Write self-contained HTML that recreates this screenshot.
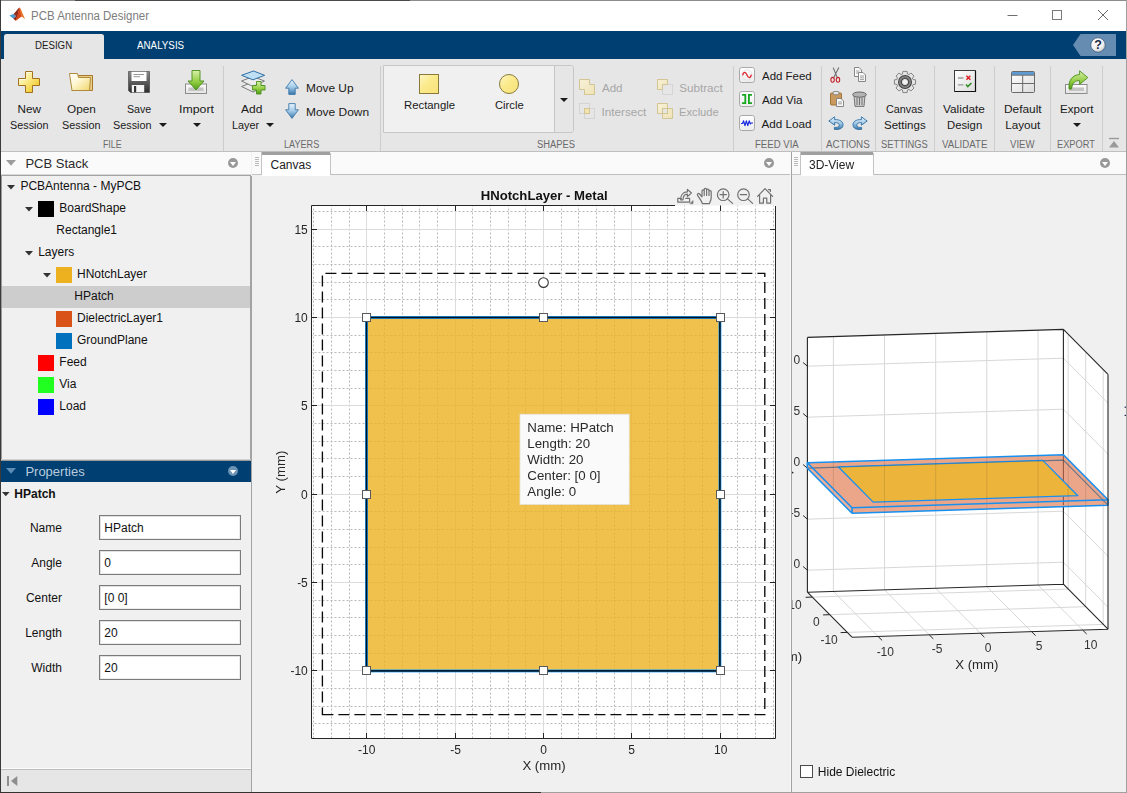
<!DOCTYPE html>
<html>
<head>
<meta charset="utf-8">
<title>PCB Antenna Designer</title>
<style>
*{box-sizing:border-box;margin:0;padding:0}
html,body{width:1127px;height:793px;overflow:hidden;background:#f0f0f0}
body{font-family:"Liberation Sans",sans-serif;font-size:12px;color:#1a1a1a;position:relative}
.abs{position:absolute}
#win{position:absolute;left:0;top:0;width:1127px;height:793px;overflow:hidden;background:#f0f0f0}
.tx{position:absolute;white-space:pre;transform-origin:0 50%;color:#1a1a1a}
.sec{color:#6b6b6b}
.dis{color:#a6a6a6}
.vsep{position:absolute;top:66px;width:1px;height:85px;background:#cdcdcd}
.arr{position:absolute;width:0;height:0;border-left:4px solid transparent;border-right:4px solid transparent;border-top:4px solid #1a1a1a}
.ico{position:absolute;overflow:visible}
.circ{position:absolute;width:10px;height:10px;border-radius:50%;background:#999}
.circ:after{content:"";position:absolute;left:2px;top:3.5px;border-left:3px solid transparent;border-right:3px solid transparent;border-top:4px solid #fff}
.sw{position:absolute;width:16px;height:16px}
.tri{position:absolute;width:0;height:0;border-left:4px solid transparent;border-right:4px solid transparent;border-top:4px solid #333}
.field{position:absolute;left:98px;width:143px;height:25px;background:#fff;border:1px solid #7a7a7a}
svg text{font-family:"Liberation Sans",sans-serif}
</style>
</head>
<body>
<div id="win">
<div class="abs" style="left:1px;top:1px;width:1125px;height:30px;background:#fff"></div>
<svg class="ico" style="left:9px;top:7px" width="17" height="16" viewBox="0 0 17 16">
<path d="M0.4 8.6 L4.6 6.9 L7.2 9.2 L4.2 11.6 Z" fill="#4a9ad4"/>
<path d="M4.6 6.9 C6.8 5.2 8.6 1.6 10.4 0.6 L9.2 8.8 L6.6 13.8 L4.2 11.6 L7.2 9.2 Z" fill="#8c2a1c"/>
<path d="M10.4 0.6 C12 1.2 13.6 7.2 16.2 12.2 C14.4 10.8 13.2 9.6 12.2 9.8 C10.6 10.2 8.6 13 6.6 13.8 C8.2 10.6 9.4 4.6 10.4 0.6 Z" fill="#e8742a"/>
<path d="M10.4 0.6 C11 3.6 11.8 7.6 12.2 9.8 C10.6 10.2 8.6 13 6.6 13.8 C8.2 10.6 9.4 4.6 10.4 0.6 Z" fill="#d6451f"/>
</svg>
<span class="tx" style="left:30.70px;top:7.64px;font-size:12px;line-height:16px;transform:scaleX(0.9562);color:#7d7d7d;">PCB Antenna Designer</span>
<svg class="ico" style="left:1000px;top:5px" width="120" height="22" viewBox="0 0 120 22">
<path d="M7.5 10.5 H17.5" stroke="#6f6f6f" stroke-width="1" fill="none"/>
<rect x="52.5" y="5.5" width="9" height="9" stroke="#7a7a7a" stroke-width="1" fill="none"/>
<path d="M98 5 L108 15 M108 5 L98 15" stroke="#6a6a6a" stroke-width="1" fill="none"/>
</svg>
<div class="abs" style="left:1px;top:31px;width:1125px;height:28px;background:#003f72"></div>
<div class="abs" style="left:4px;top:34px;width:100px;height:25px;background:#e6e6e6;border-radius:2.5px 2.5px 0 0"></div>
<span class="tx" style="left:35.40px;top:37.45px;font-size:11.7px;line-height:15px;transform:scaleX(0.8293);color:#1c1c1c;">DESIGN</span>
<span class="tx" style="left:136.60px;top:37.45px;font-size:11.7px;line-height:15px;transform:scaleX(0.8375);color:#ffffff;">ANALYSIS</span>
<svg class="ico" style="left:1073px;top:34px" width="44" height="22" viewBox="0 0 44 22">
<defs><radialGradient id="hg" cx="0.4" cy="0.3" r="0.8"><stop offset="0" stop-color="#ffffff"/><stop offset="0.6" stop-color="#f0f0f0"/><stop offset="1" stop-color="#b8b8b8"/></radialGradient></defs>
<path d="M0 11 L7.5 0 H43 V22 H7.5 Z" fill="#668db1"/>
<circle cx="25" cy="11" r="7.2" fill="url(#hg)" stroke="#2a4a70" stroke-width="0.6"/>
<text x="25" y="15.4" font-size="12.5" font-weight="bold" text-anchor="middle" fill="#1c2a48">?</text>
</svg>
<div class="abs" style="left:1px;top:59px;width:1125px;height:92px;background:#e6e6e6"></div>
<div class="abs" style="left:1px;top:151px;width:1125px;height:1px;background:#bfbfbf"></div>
<div class="vsep" style="left:223px"></div>
<div class="vsep" style="left:380px"></div>
<div class="vsep" style="left:733px"></div>
<div class="vsep" style="left:821px"></div>
<div class="vsep" style="left:875px"></div>
<div class="vsep" style="left:934px"></div>
<div class="vsep" style="left:994px"></div>
<div class="vsep" style="left:1050px"></div>
<div class="vsep" style="left:1102px"></div>
<span class="tx sec" style="left:103.00px;top:136.25px;font-size:11.7px;line-height:15px;transform:scaleX(0.7487);">FILE</span>
<span class="tx sec" style="left:283.90px;top:136.25px;font-size:11.7px;line-height:15px;transform:scaleX(0.7792);">LAYERS</span>
<span class="tx sec" style="left:537.00px;top:136.25px;font-size:11.7px;line-height:15px;transform:scaleX(0.8005);">SHAPES</span>
<span class="tx sec" style="left:755.00px;top:136.25px;font-size:11.7px;line-height:15px;transform:scaleX(0.8216);">FEED VIA</span>
<span class="tx sec" style="left:826.20px;top:136.25px;font-size:11.7px;line-height:15px;transform:scaleX(0.8422);">ACTIONS</span>
<span class="tx sec" style="left:881.20px;top:136.25px;font-size:11.7px;line-height:15px;transform:scaleX(0.7999);">SETTINGS</span>
<span class="tx sec" style="left:942.00px;top:136.25px;font-size:11.7px;line-height:15px;transform:scaleX(0.8298);">VALIDATE</span>
<span class="tx sec" style="left:1010.00px;top:136.25px;font-size:11.7px;line-height:15px;transform:scaleX(0.8227);">VIEW</span>
<span class="tx sec" style="left:1057.30px;top:136.25px;font-size:11.7px;line-height:15px;transform:scaleX(0.7913);">EXPORT</span>
<span class="tx" style="left:17.50px;top:101.25px;font-size:11.7px;line-height:15px;">New</span>
<span class="tx" style="left:9.80px;top:117.05px;font-size:11.7px;line-height:15px;transform:scaleX(0.9249);">Session</span>
<span class="tx" style="left:66.60px;top:101.25px;font-size:11.7px;line-height:15px;transform:scaleX(1.0097);">Open</span>
<span class="tx" style="left:61.70px;top:117.05px;font-size:11.7px;line-height:15px;transform:scaleX(0.9249);">Session</span>
<span class="tx" style="left:126.70px;top:101.25px;font-size:11.7px;line-height:15px;transform:scaleX(0.9112);">Save</span>
<span class="tx" style="left:113.30px;top:117.05px;font-size:11.7px;line-height:15px;transform:scaleX(0.9249);">Session</span>
<div class="arr" style="left:159px;top:123px"></div>
<span class="tx" style="left:178.70px;top:101.25px;font-size:11.7px;line-height:15px;transform:scaleX(1.0555);">Import</span>
<div class="arr" style="left:192.5px;top:123px"></div>
<span class="tx" style="left:241.30px;top:101.25px;font-size:11.7px;line-height:15px;transform:scaleX(1.0231);">Add</span>
<span class="tx" style="left:232.40px;top:117.05px;font-size:11.7px;line-height:15px;transform:scaleX(0.9293);">Layer</span>
<div class="arr" style="left:266px;top:123px"></div>
<span class="tx" style="left:306.40px;top:80.45px;font-size:11.7px;line-height:15px;transform:scaleX(1.0167);">Move Up</span>
<span class="tx" style="left:306.40px;top:104.45px;font-size:11.7px;line-height:15px;transform:scaleX(1.0231);">Move Down</span>
<div class="abs" style="left:383px;top:65px;width:191px;height:68px;background:#f0f0f0;border:1px solid #c6c6c6;border-radius:0 3px 3px 0"></div>
<div class="abs" style="left:554px;top:66px;width:19px;height:66px;background:#e6e6e6;border-left:1px solid #c6c6c6;border-radius:0 3px 3px 0"></div>
<div class="arr" style="left:560px;top:98px"></div>
<span class="tx" style="left:403.70px;top:97.05px;font-size:11.7px;line-height:15px;transform:scaleX(0.9699);">Rectangle</span>
<span class="tx" style="left:494.60px;top:97.05px;font-size:11.7px;line-height:15px;transform:scaleX(0.9598);">Circle</span>
<span class="tx dis" style="left:601.50px;top:80.45px;font-size:11.7px;line-height:15px;transform:scaleX(0.9847);">Add</span>
<span class="tx dis" style="left:601.50px;top:104.45px;font-size:11.7px;line-height:15px;">Intersect</span>
<span class="tx dis" style="left:679.20px;top:80.45px;font-size:11.7px;line-height:15px;">Subtract</span>
<span class="tx dis" style="left:679.20px;top:104.45px;font-size:11.7px;line-height:15px;transform:scaleX(0.9562);">Exclude</span>
<span class="tx" style="left:761.50px;top:68.45px;font-size:11.7px;line-height:15px;transform:scaleX(0.9815);">Add Feed</span>
<span class="tx" style="left:761.50px;top:92.15px;font-size:11.7px;line-height:15px;transform:scaleX(0.9934);">Add Via</span>
<span class="tx" style="left:761.50px;top:116.25px;font-size:11.7px;line-height:15px;">Add Load</span>
<span class="tx" style="left:886.00px;top:101.25px;font-size:11.7px;line-height:15px;transform:scaleX(0.9251);">Canvas</span>
<span class="tx" style="left:883.70px;top:117.05px;font-size:11.7px;line-height:15px;transform:scaleX(0.9864);">Settings</span>
<span class="tx" style="left:943.40px;top:101.25px;font-size:11.7px;line-height:15px;transform:scaleX(1.0141);">Validate</span>
<span class="tx" style="left:947.00px;top:117.05px;font-size:11.7px;line-height:15px;transform:scaleX(0.9665);">Design</span>
<span class="tx" style="left:1003.70px;top:101.25px;font-size:11.7px;line-height:15px;transform:scaleX(1.0169);">Default</span>
<span class="tx" style="left:1005.20px;top:117.05px;font-size:11.7px;line-height:15px;">Layout</span>
<span class="tx" style="left:1059.50px;top:101.25px;font-size:11.7px;line-height:15px;transform:scaleX(0.9936);">Export</span>
<div class="arr" style="left:1072.5px;top:123px"></div>
<svg class="ico" style="left:1108px;top:137px" width="12" height="12" viewBox="0 0 12 12"><path d="M1 1.5 H11" stroke="#9a9a9a" stroke-width="1.4"/><path d="M6 4 L11 10.5 H1 Z" fill="#9a9a9a"/></svg>
<svg width="0" height="0" style="position:absolute"><defs>
<linearGradient id="gy" x1="0" y1="0" x2="1" y2="1"><stop offset="0" stop-color="#fffdf2"/><stop offset="0.35" stop-color="#fdf0a2"/><stop offset="0.7" stop-color="#f5d64a"/><stop offset="1" stop-color="#e2b02a"/></linearGradient>
<linearGradient id="gfold" x1="0" y1="0" x2="1" y2="1"><stop offset="0" stop-color="#ffffff"/><stop offset="0.4" stop-color="#fff8d6"/><stop offset="1" stop-color="#f0d56a"/></linearGradient>
<linearGradient id="gsave" x1="0" y1="0" x2="0" y2="1"><stop offset="0" stop-color="#8a8a8a"/><stop offset="1" stop-color="#2e2e2e"/></linearGradient>
<linearGradient id="ggreen" x1="0" y1="0" x2="0" y2="1"><stop offset="0" stop-color="#d9f0a8"/><stop offset="0.6" stop-color="#8fcb3e"/><stop offset="1" stop-color="#4f9a1a"/></linearGradient>
<linearGradient id="gtray" x1="0" y1="0" x2="0" y2="1"><stop offset="0" stop-color="#ffffff"/><stop offset="1" stop-color="#e2e2e2"/></linearGradient>
<linearGradient id="gblue" x1="0" y1="0" x2="0" y2="1"><stop offset="0" stop-color="#eaf4fc"/><stop offset="0.5" stop-color="#a3cbe8"/><stop offset="1" stop-color="#3776ab"/></linearGradient>
<linearGradient id="gshape" x1="0" y1="0" x2="1" y2="1"><stop offset="0" stop-color="#fdf6c4"/><stop offset="0.45" stop-color="#fbea8c"/><stop offset="1" stop-color="#f7e27a"/></linearGradient>
<linearGradient id="gdis" x1="0" y1="0" x2="1" y2="1"><stop offset="0" stop-color="#f7f1d8"/><stop offset="1" stop-color="#efe3b6"/></linearGradient>
<linearGradient id="gbtn" x1="0" y1="0" x2="0" y2="1"><stop offset="0" stop-color="#ffffff"/><stop offset="1" stop-color="#ececec"/></linearGradient>
<linearGradient id="gpane" x1="0" y1="0" x2="1" y2="1"><stop offset="0" stop-color="#ffffff"/><stop offset="1" stop-color="#dcdcdc"/></linearGradient>
<radialGradient id="ggear" cx="0.5" cy="0.5" r="0.5"><stop offset="0.36" stop-color="#f0f0f0"/><stop offset="0.44" stop-color="#383838"/><stop offset="0.74" stop-color="#909090"/><stop offset="0.92" stop-color="#404040"/><stop offset="1" stop-color="#404040"/></radialGradient>
</defs></svg>
<svg class="ico" style="left:18px;top:71px" width="22" height="22" viewBox="0 0 22 22"><path d="M7.5 0.5 H14.5 V7.5 H21.5 V14.5 H14.5 V21.5 H7.5 V14.5 H0.5 V7.5 H7.5 Z" fill="url(#gy)" stroke="#a3721f" stroke-width="1" stroke-linejoin="round"/><path d="M8.5 1.5 H13.5 M1.5 8.5 H7.5 " stroke="#fffdf0" stroke-width="1" opacity="0.8"/></svg>
<svg class="ico" style="left:69px;top:73px" width="24" height="18" viewBox="0 0 24 18"><path d="M9.5 2.5 H23.5 V17.5 H3 Z" fill="#e8cf85" stroke="#a8782a" stroke-width="1" stroke-linejoin="round"/><path d="M0.5 0.5 H8.5 L9.5 4.5 H21.5 L20.5 17.5 H3 Z" fill="url(#gfold)" stroke="#b08a3c" stroke-width="1" stroke-linejoin="round"/></svg>
<svg class="ico" style="left:128px;top:71px" width="22" height="22" viewBox="0 0 22 22"><path d="M0.5 0.5 H21.5 V21.5 H2.5 L0.5 19.5 Z" fill="url(#gsave)" stroke="#3a3a3a" stroke-width="0.6"/><rect x="3.5" y="0.8" width="15" height="9.2" fill="#fff"/><path d="M5.5 3.5 H16 M5.5 5.7 H12" stroke="#8a8a8a" stroke-width="0.9"/><rect x="3.8" y="14" width="12.4" height="7.3" fill="#f4f4f4"/><rect x="6" y="15" width="2.2" height="6.3" fill="#333"/></svg>
<svg class="ico" style="left:185px;top:70px" width="22" height="24" viewBox="0 0 22 24"><rect x="0.5" y="14" width="21" height="9.5" fill="url(#gtray)" stroke="#8c8c8c" stroke-width="1"/><rect x="3.5" y="17.5" width="15" height="3.5" fill="#c4c4c4"/><path d="M7 0.5 H15 V11 H19 L11 20 L3 11 H7 Z" fill="url(#ggreen)" stroke="#4a8f1c" stroke-width="0.9" stroke-linejoin="round"/></svg>
<svg class="ico" style="left:241px;top:70px" width="25" height="24" viewBox="0 0 25 24"><path d="M0.6 16.5 L12 12 L23.4 16.5 L12 22 Z" fill="#ececec" stroke="#6e6e6e" stroke-width="0.9"/><path d="M0.6 11 L12 6.5 L23.4 11 L12 16.5 Z" fill="#ececec" stroke="#6e6e6e" stroke-width="0.9"/><path d="M0.6 5.3 L12.5 1 L23.6 5.3 L12 9.8 Z" fill="#bfe0f4" stroke="#2f6ea3" stroke-width="1"/><path d="M15.5 11.5 H20 V15.5 H24 V20 H20 V24 H15.5 V20 H11.5 V15.5 H15.5 Z" fill="url(#ggreen)" stroke="#4a8f1c" stroke-width="0.9" stroke-linejoin="round"/></svg>
<svg class="ico" style="left:285px;top:79px" width="14" height="16" viewBox="0 0 14 16"><path d="M7 0.6 L13.4 9.2 H10.2 V15.4 H3.8 V9.2 H0.6 Z" fill="url(#gblue)" stroke="#3d78aa" stroke-width="0.9" stroke-linejoin="round"/></svg>
<svg class="ico" style="left:285px;top:103px" width="14" height="16" viewBox="0 0 14 16"><path d="M7 15.4 L13.4 6.8 H10.2 V0.6 H3.8 V6.8 H0.6 Z" fill="url(#gblue)" stroke="#3d78aa" stroke-width="0.9" stroke-linejoin="round"/></svg>
<svg class="ico" style="left:419px;top:74px" width="20" height="20" viewBox="0 0 20 20"><rect x="0.5" y="0.5" width="19" height="19" fill="url(#gshape)" stroke="#8a7a3a" stroke-width="1"/></svg>
<svg class="ico" style="left:499px;top:74px" width="20" height="20" viewBox="0 0 20 20"><circle cx="10" cy="10" r="9.5" fill="url(#gshape)" stroke="#8a7a3a" stroke-width="1"/></svg>
<svg class="ico" style="left:579px;top:79px" width="16" height="16" viewBox="0 0 16 16"><path d="M0.5 0.5 H10.5 V5.5 H15.5 V15.5 H5.5 V10.5 H0.5 Z" fill="url(#gdis)" stroke="#d2c493" stroke-width="1"/></svg>
<svg class="ico" style="left:579px;top:103px" width="16" height="16" viewBox="0 0 16 16"><rect x="0.5" y="0.5" width="10" height="10" fill="none" stroke="#d4d4d4"/><rect x="5.5" y="5.5" width="10" height="10" fill="none" stroke="#d4d4d4"/><rect x="5.5" y="5.5" width="5" height="5" fill="#f1e4ae" stroke="#d2c493"/></svg>
<svg class="ico" style="left:657px;top:79px" width="16" height="16" viewBox="0 0 16 16"><rect x="5.5" y="5.5" width="10" height="10" fill="none" stroke="#d4d4d4"/><path d="M0.5 0.5 H10.5 V5.5 H5.5 V10.5 H0.5 Z" fill="url(#gdis)" stroke="#d2c493"/></svg>
<svg class="ico" style="left:657px;top:103px" width="16" height="16" viewBox="0 0 16 16"><path d="M0.5 0.5 H10.5 V5.5 H15.5 V15.5 H5.5 V10.5 H0.5 Z" fill="url(#gdis)" stroke="#d2c493"/><rect x="5.5" y="5.5" width="5" height="5" fill="#e6e6e6" stroke="#d2c493"/></svg>
<svg class="ico" style="left:739px;top:67px" width="16" height="16" viewBox="0 0 16 16"><rect x="0.5" y="0.5" width="15" height="15" rx="2.2" fill="url(#gbtn)" stroke="#a9a9a9"/><circle cx="8" cy="8" r="5.2" fill="none" stroke="#e2e2e2" stroke-width="0.8"/><path d="M3.6 8.4 C4.6 4.2 6.6 4.6 8 8 C9.4 11.4 11.4 11.6 12.4 7.6" fill="none" stroke="#e0202a" stroke-width="1.3"/></svg>
<svg class="ico" style="left:739px;top:91px" width="16" height="16" viewBox="0 0 16 16"><rect x="0.5" y="0.5" width="15" height="15" rx="2.2" fill="url(#gbtn)" stroke="#a9a9a9"/><path d="M3 3.8 H6.3 V12.2 H3 M13 3.8 H9.9 V12.2 H13" fill="none" stroke="#18a81e" stroke-width="1.8"/></svg>
<svg class="ico" style="left:739px;top:115px" width="16" height="16" viewBox="0 0 16 16"><rect x="0.5" y="0.5" width="15" height="15" rx="2.2" fill="url(#gbtn)" stroke="#a9a9a9"/><path d="M2 8.5 H3.6 L4.6 5.8 L6 10.6 L7.4 5.8 L8.8 10.6 L10.2 5.8 L11.4 9 L12.2 8 H14" fill="none" stroke="#1a2be0" stroke-width="1.2" stroke-linejoin="round"/></svg>
<svg class="ico" style="left:830px;top:67px" width="11" height="16" viewBox="0 0 11 16"><path d="M8.8 0.4 L3.8 10.6 M3.2 0.6 L7.2 10.6" stroke="#6e6e6e" stroke-width="1.1" fill="none"/><ellipse cx="2.6" cy="12.8" rx="1.7" ry="2.4" fill="none" stroke="#c4222a" stroke-width="1.1"/><ellipse cx="8" cy="12.8" rx="1.7" ry="2.4" fill="none" stroke="#c4222a" stroke-width="1.1"/></svg>
<svg class="ico" style="left:854px;top:67px" width="12" height="15" viewBox="0 0 12 15"><path d="M0.5 0.5 H5 L7.5 3 V9.5 H0.5 Z" fill="#fafafa" stroke="#7a7a7a" stroke-width="0.9"/><path d="M2 4 H5.5 M2 6 H5.5" stroke="#8a8a8a" stroke-width="0.8"/><path d="M4.5 5.5 H9 L11.5 8 V14.5 H4.5 Z" fill="#fafafa" stroke="#7a7a7a" stroke-width="0.9"/><path d="M6 9 H10 M6 10.8 H10 M6 12.6 H10" stroke="#8a8a8a" stroke-width="0.8"/></svg>
<svg class="ico" style="left:830px;top:91px" width="14" height="16" viewBox="0 0 14 16"><rect x="0.5" y="2" width="11" height="12" rx="1" fill="#c99a5e" stroke="#9a6a2e" stroke-width="0.9"/><rect x="3.2" y="0.5" width="5.6" height="3.2" rx="0.8" fill="#e6e6e6" stroke="#7a7a7a" stroke-width="0.8"/><path d="M6.5 7.5 H11 L13.5 10 V15.5 H6.5 Z" fill="#fbfbfb" stroke="#7a7a7a" stroke-width="0.9"/><path d="M8 11 H12 M8 12.8 H12" stroke="#8a8a8a" stroke-width="0.8"/></svg>
<svg class="ico" style="left:852px;top:91px" width="15" height="16" viewBox="0 0 15 16"><path d="M2 4.5 H13 L12 15.4 H3 Z" fill="#cfcfcf" stroke="#6a6a6a" stroke-width="0.9"/><ellipse cx="7.5" cy="3.6" rx="6.8" ry="2.6" fill="#b4b4b4" stroke="#5a5a5a" stroke-width="0.9"/><path d="M5 6.5 V14 M7.5 6.5 V14 M10 6.5 V14" stroke="#6e6e6e" stroke-width="1"/></svg>
<svg class="ico" style="left:828px;top:116px" width="16" height="14" viewBox="0 0 16 14"><path d="M6.6 0.8 L0.8 5 L6.6 9.2 V6.6 C10 6.4 11.4 7.6 11.2 9.4 C11 11 9.4 11.6 6.4 11.4 V13.4 C11.6 13.8 14.8 12.4 15 9.2 C15.2 5.6 12 3.4 6.6 3.6 Z" fill="url(#gblue)" stroke="#2f6ea3" stroke-width="0.9" stroke-linejoin="round"/></svg>
<svg class="ico" style="left:852px;top:116px" width="16" height="14" viewBox="0 0 16 14"><g transform="translate(16,0) scale(-1,1)"><path d="M6.6 0.8 L0.8 5 L6.6 9.2 V6.6 C10 6.4 11.4 7.6 11.2 9.4 C11 11 9.4 11.6 6.4 11.4 V13.4 C11.6 13.8 14.8 12.4 15 9.2 C15.2 5.6 12 3.4 6.6 3.6 Z" fill="url(#gblue)" stroke="#2f6ea3" stroke-width="0.9" stroke-linejoin="round"/></g></svg>
<svg class="ico" style="left:894px;top:71px" width="22" height="22" viewBox="0 0 22 22"><path d="M19.02 8.52 L21.58 8.85 L21.58 13.15 L19.02 13.48 L18.43 14.92 L20.00 16.97 L16.97 20.00 L14.92 18.43 L13.48 19.02 L13.15 21.58 L8.85 21.58 L8.52 19.02 L7.08 18.43 L5.03 20.00 L2.00 16.97 L3.57 14.92 L2.98 13.48 L0.42 13.15 L0.42 8.85 L2.98 8.52 L3.57 7.08 L2.00 5.03 L5.03 2.00 L7.08 3.57 L8.52 2.98 L8.85 0.42 L13.15 0.42 L13.48 2.98 L14.92 3.57 L16.97 2.00 L20.00 5.03 L18.43 7.08 Z" fill="#e4e4e4" stroke="#7a7a7a" stroke-width="0.9" stroke-linejoin="round"/><circle cx="11" cy="11" r="7" fill="url(#ggear)"/><circle cx="11" cy="11" r="2.6" fill="#f2f2f2" stroke="#dadada" stroke-width="0.8"/></svg>
<svg class="ico" style="left:954px;top:70px" width="22" height="22" viewBox="0 0 22 22"><rect x="0.5" y="0.5" width="21" height="21" fill="url(#gpane)" stroke="#3c3c3c" stroke-width="1"/><path d="M21.5 1 V21.5 H1" stroke="#111" stroke-width="1.2" fill="none"/><path d="M4 8 H9.5 M4 14.8 H9.5" stroke="#9a9a9a" stroke-width="1.3"/><path d="M12.4 5.8 L16.4 9.8 M16.4 5.8 L12.4 9.8" stroke="#dc1f26" stroke-width="1.5"/><path d="M12 14.6 L13.8 16.6 L17.4 13" stroke="#2f8a22" stroke-width="1.5" fill="none"/></svg>
<svg class="ico" style="left:1011px;top:71px" width="24" height="22" viewBox="0 0 24 22"><rect x="0.5" y="0.5" width="23" height="21" rx="1" fill="url(#gpane)" stroke="#6a6a6a" stroke-width="1"/><rect x="1" y="1" width="22" height="3" fill="#5f9ad2"/><path d="M0.5 4.2 H23.5 M0.5 12.5 H23.5 M11.7 4.2 V21.5" stroke="#6a6a6a" stroke-width="1"/></svg>
<svg class="ico" style="left:1065px;top:70px" width="24" height="24" viewBox="0 0 24 24"><rect x="0.5" y="14.5" width="21.5" height="9" fill="url(#gtray)" stroke="#8c8c8c" stroke-width="1"/><rect x="4" y="17.5" width="15" height="3.5" fill="#c4c4c4"/><path d="M4 19 C3.2 10 7.6 4.8 14.6 4.6 V0.8 L22.8 7.6 L14.6 14.4 V10.6 C10.4 10.4 7.2 12.6 6.6 19 Z" fill="url(#ggreen)" stroke="#4a8f1c" stroke-width="0.9" stroke-linejoin="round"/></svg>
<div class="abs" style="left:1px;top:152px;width:250px;height:22px;background:#fafafa"></div>
<div class="abs" style="left:1px;top:174px;width:250px;height:1px;background:#d9d9d9"></div>
<div class="abs" style="left:1px;top:175px;width:250px;height:1px;background:#a3a3a3"></div>
<svg class="ico" style="left:6px;top:160px" width="10" height="6"><path d="M0 0 H10 L5 5.8 Z" fill="#9c9c9c"/></svg>
<span class="tx" style="left:25.40px;top:154.90px;font-size:13px;line-height:17px;color:#2a2a2a;">PCB Stack</span>
<div class="circ" style="left:228px;top:158px"></div>
<div class="abs" style="left:1px;top:176px;width:249px;height:283px;background:#f0f0f0"></div>
<div class="abs" style="left:1px;top:176px;width:1px;height:284px;background:#9a9a9a"></div>
<div class="abs" style="left:250px;top:176px;width:1px;height:284px;background:#a3a3a3"></div>
<div class="abs" style="left:1px;top:459px;width:250px;height:1px;background:#d0d0d0"></div>
<div class="abs" style="left:1px;top:460px;width:250px;height:1px;background:#9a9a9a"></div>
<div class="abs" style="left:2px;top:286px;width:248px;height:22px;background:#cdcdcd"></div>
<svg class="ico" style="left:7px;top:185px" width="8" height="5"><path d="M0 0 H8 L4 4.4 Z" fill="#333"/></svg>
<span class="tx" style="left:20.40px;top:177.64px;font-size:12px;line-height:16px;color:#111;">PCBAntenna - MyPCB</span>
<svg class="ico" style="left:25px;top:207px" width="8" height="5"><path d="M0 0 H8 L4 4.4 Z" fill="#333"/></svg>
<div class="sw" style="left:38px;top:201px;background:#000000"></div>
<span class="tx" style="left:59.30px;top:199.64px;font-size:12px;line-height:16px;color:#111;">BoardShape</span>
<span class="tx" style="left:56.30px;top:221.64px;font-size:12px;line-height:16px;color:#111;">Rectangle1</span>
<svg class="ico" style="left:25px;top:251px" width="8" height="5"><path d="M0 0 H8 L4 4.4 Z" fill="#333"/></svg>
<span class="tx" style="left:38.20px;top:243.64px;font-size:12px;line-height:16px;color:#111;">Layers</span>
<svg class="ico" style="left:43px;top:273px" width="8" height="5"><path d="M0 0 H8 L4 4.4 Z" fill="#333"/></svg>
<div class="sw" style="left:56px;top:267px;background:#edb120"></div>
<span class="tx" style="left:77.00px;top:265.64px;font-size:12px;line-height:16px;color:#111;">HNotchLayer</span>
<span class="tx" style="left:74.30px;top:287.64px;font-size:12px;line-height:16px;color:#111;">HPatch</span>
<div class="sw" style="left:56px;top:311px;background:#d95319"></div>
<span class="tx" style="left:77.00px;top:309.64px;font-size:12px;line-height:16px;color:#111;">DielectricLayer1</span>
<div class="sw" style="left:56px;top:333px;background:#0072bd"></div>
<span class="tx" style="left:77.00px;top:331.64px;font-size:12px;line-height:16px;color:#111;">GroundPlane</span>
<div class="sw" style="left:38px;top:355px;background:#ff0000"></div>
<span class="tx" style="left:59.30px;top:353.64px;font-size:12px;line-height:16px;color:#111;">Feed</span>
<div class="sw" style="left:38px;top:377px;background:#20ff20"></div>
<span class="tx" style="left:59.30px;top:375.64px;font-size:12px;line-height:16px;color:#111;">Via</span>
<div class="sw" style="left:38px;top:399px;background:#0000ff"></div>
<span class="tx" style="left:59.30px;top:397.64px;font-size:12px;line-height:16px;color:#111;">Load</span>
<div class="abs" style="left:1px;top:461px;width:250px;height:21px;background:#003f72"></div>
<svg class="ico" style="left:6px;top:468px" width="10" height="6"><path d="M0 0 H10 L5 5.8 Z" fill="#5d8db6"/></svg>
<span class="tx" style="left:25.40px;top:462.80px;font-size:13px;line-height:17px;color:#b9ccdd;">Properties</span>
<div class="circ" style="left:228px;top:466px;background:#6c93b6"></div>
<div class="abs" style="left:1px;top:482px;width:250px;height:286px;background:#f0f0f0"></div>
<div class="abs" style="left:251px;top:176px;width:1px;height:616px;background:#a3a3a3"></div>
<svg class="ico" style="left:2px;top:492px" width="8" height="5"><path d="M0 0 H7.6 L3.8 4.2 Z" fill="#333"/></svg>
<span class="tx" style="left:14.30px;top:485.54px;font-size:12px;line-height:16px;color:#111;font-weight:bold;">HPatch</span>
<span class="tx" style="left:29.89px;top:519.84px;font-size:12px;line-height:16px;color:#111;">Name</span>
<div class="abs" style="left:99px;top:515px;width:142px;height:25px;background:#fff;border:1px solid #7b7b7b;box-shadow:inset 1px 1px 0 #e1e1e1,inset -1px -1px 0 #ececec"></div>
<span class="tx" style="left:104.30px;top:519.84px;font-size:12px;line-height:16px;color:#111;">HPatch</span>
<span class="tx" style="left:31.21px;top:554.84px;font-size:12px;line-height:16px;color:#111;">Angle</span>
<div class="abs" style="left:99px;top:550px;width:142px;height:25px;background:#fff;border:1px solid #7b7b7b;box-shadow:inset 1px 1px 0 #e1e1e1,inset -1px -1px 0 #ececec"></div>
<span class="tx" style="left:104.30px;top:554.84px;font-size:12px;line-height:16px;color:#111;">0</span>
<span class="tx" style="left:25.88px;top:589.84px;font-size:12px;line-height:16px;color:#111;">Center</span>
<div class="abs" style="left:99px;top:585px;width:142px;height:25px;background:#fff;border:1px solid #7b7b7b;box-shadow:inset 1px 1px 0 #e1e1e1,inset -1px -1px 0 #ececec"></div>
<span class="tx" style="left:104.30px;top:589.84px;font-size:12px;line-height:16px;color:#111;">[0 0]</span>
<span class="tx" style="left:25.20px;top:624.84px;font-size:12px;line-height:16px;color:#111;">Length</span>
<div class="abs" style="left:99px;top:620px;width:142px;height:25px;background:#fff;border:1px solid #7b7b7b;box-shadow:inset 1px 1px 0 #e1e1e1,inset -1px -1px 0 #ececec"></div>
<span class="tx" style="left:104.30px;top:624.84px;font-size:12px;line-height:16px;color:#111;">20</span>
<span class="tx" style="left:31.23px;top:659.84px;font-size:12px;line-height:16px;color:#111;">Width</span>
<div class="abs" style="left:99px;top:655px;width:142px;height:25px;background:#fff;border:1px solid #7b7b7b;box-shadow:inset 1px 1px 0 #e1e1e1,inset -1px -1px 0 #ececec"></div>
<span class="tx" style="left:104.30px;top:659.84px;font-size:12px;line-height:16px;color:#111;">20</span>
<div class="abs" style="left:1px;top:768px;width:250px;height:1px;background:#fcfcfc"></div>
<div class="abs" style="left:1px;top:769px;width:250px;height:1px;background:#bdbdbd"></div>
<div class="abs" style="left:1px;top:770px;width:250px;height:22px;background:#e6e6e6"></div>
<svg class="ico" style="left:7px;top:776px" width="11" height="10"><rect x="0" y="0" width="2" height="10" fill="#8e8e8e"/><path d="M10.3 0 V10 L4 5 Z" fill="#8e8e8e"/></svg>
<div class="abs" style="left:252px;top:152px;width:539px;height:22px;background:#fafafa"></div>
<div class="abs" style="left:252px;top:174px;width:539px;height:1px;background:#bebebe"></div>
<div class="abs" style="left:252px;top:175px;width:539px;height:1px;background:#efefef"></div>
<div class="abs" style="left:252px;top:152px;width:10px;height:23px;background:#fafafa;border-right:1px solid #c4c4c4;border-bottom:1px solid #c4c4c4"></div>
<svg class="ico" style="left:255px;top:157px" width="5" height="10"><path d="M0 0.5H4M0 2.5H4M0 4.5H4M0 6.5H4M0 8.5H4" stroke="#b9b9b9" stroke-width="1"/></svg>
<div class="abs" style="left:262px;top:152px;width:68px;height:24px;background:#fff;border-top:3px solid #a0a0a0"></div>
<div class="abs" style="left:330px;top:153px;width:1px;height:22px;background:#c4c4c4"></div>
<span class="tx" style="left:270.50px;top:156.54px;font-size:12px;line-height:16px;color:#222;">Canvas</span>
<div class="circ" style="left:764px;top:158px"></div>
<div class="abs" style="left:252px;top:176px;width:539px;height:616px;background:#f0f0f0"></div>
<svg class="ico" style="left:0;top:0;will-change:transform" width="1127" height="793" viewBox="0 0 1127 793">
<rect x="311.5" y="205.5" width="464.0" height="533.0" fill="#fff"/>
<path d="M313.5 205.5V738.5M331.5 205.5V738.5M349.5 205.5V738.5M384.5 205.5V738.5M402.5 205.5V738.5M419.5 205.5V738.5M437.5 205.5V738.5M472.5 205.5V738.5M490.5 205.5V738.5M508.5 205.5V738.5M525.5 205.5V738.5M561.5 205.5V738.5M578.5 205.5V738.5M596.5 205.5V738.5M614.5 205.5V738.5M649.5 205.5V738.5M667.5 205.5V738.5M684.5 205.5V738.5M702.5 205.5V738.5M737.5 205.5V738.5M755.5 205.5V738.5M773.5 205.5V738.5" stroke="#bababa" stroke-width="1" stroke-dasharray="2 2" stroke-dashoffset="1" fill="none"/>
<path d="M311.5 723.5H775.5M311.5 706.5H775.5M311.5 688.5H775.5M311.5 653.5H775.5M311.5 635.5H775.5M311.5 617.5H775.5M311.5 600.5H775.5M311.5 564.5H775.5M311.5 547.5H775.5M311.5 529.5H775.5M311.5 511.5H775.5M311.5 476.5H775.5M311.5 458.5H775.5M311.5 441.5H775.5M311.5 423.5H775.5M311.5 388.5H775.5M311.5 370.5H775.5M311.5 352.5H775.5M311.5 335.5H775.5M311.5 299.5H775.5M311.5 282.5H775.5M311.5 264.5H775.5M311.5 246.5H775.5M311.5 211.5H775.5" stroke="#bababa" stroke-width="1" stroke-dasharray="2 2" stroke-dashoffset="1" fill="none"/>
<path d="M366.5 205.5V738.5M455.5 205.5V738.5M543.5 205.5V738.5M631.5 205.5V738.5M720.5 205.5V738.5M311.5 670.5H775.5M311.5 582.5H775.5M311.5 494.5H775.5M311.5 405.5H775.5M311.5 317.5H775.5M311.5 229.5H775.5" stroke="#dcdcdc" stroke-width="1" fill="none"/>
<path d="M322.4 714.6H764.8V273.4H322.4Z" fill="none" stroke="#0a0a0a" stroke-width="1.35" stroke-dasharray="11 5"/>
<rect x="366.5" y="317.5" width="353.4" height="353.4" fill="#edb120" fill-opacity="0.8" stroke="#2aa2f2" stroke-width="3"/>
<rect x="366.5" y="317.5" width="353.4" height="353.4" fill="none" stroke="#00101f" stroke-width="1.6"/>
<path d="M366.5 738.5v-5.5M366.5 205.5v5.5M455.5 738.5v-5.5M455.5 205.5v5.5M543.5 738.5v-5.5M543.5 205.5v5.5M631.5 738.5v-5.5M631.5 205.5v5.5M720.5 738.5v-5.5M720.5 205.5v5.5M311.5 670.5h5.5M775.5 670.5h-5.5M311.5 582.5h5.5M775.5 582.5h-5.5M311.5 494.5h5.5M775.5 494.5h-5.5M311.5 405.5h5.5M775.5 405.5h-5.5M311.5 317.5h5.5M775.5 317.5h-5.5M311.5 229.5h5.5M775.5 229.5h-5.5" stroke="#262626" stroke-width="1" fill="none"/>
<path d="M675 205.5H311.5V738.5H775.5V206.0" stroke="#262626" stroke-width="1" fill="none"/>
<rect x="362.5" y="313.5" width="8" height="8" fill="#fff" stroke="#5a5a5a" stroke-width="1"/>
<rect x="539.5" y="313.5" width="8" height="8" fill="#fff" stroke="#5a5a5a" stroke-width="1"/>
<rect x="716.5" y="313.5" width="8" height="8" fill="#fff" stroke="#5a5a5a" stroke-width="1"/>
<rect x="362.5" y="490.5" width="8" height="8" fill="#fff" stroke="#5a5a5a" stroke-width="1"/>
<rect x="716.5" y="490.5" width="8" height="8" fill="#fff" stroke="#5a5a5a" stroke-width="1"/>
<rect x="362.5" y="666.5" width="8" height="8" fill="#fff" stroke="#5a5a5a" stroke-width="1"/>
<rect x="539.5" y="666.5" width="8" height="8" fill="#fff" stroke="#5a5a5a" stroke-width="1"/>
<rect x="716.5" y="666.5" width="8" height="8" fill="#fff" stroke="#5a5a5a" stroke-width="1"/>
<circle cx="543.5" cy="282.6" r="4.8" fill="#fff" stroke="#333" stroke-width="1.1"/>
<text x="366.7" y="753.7" font-size="12" text-anchor="middle" fill="#262626">-10</text>
<text x="455.7" y="753.7" font-size="12" text-anchor="middle" fill="#262626">-5</text>
<text x="543.7" y="753.7" font-size="12" text-anchor="middle" fill="#262626">0</text>
<text x="631.7" y="753.7" font-size="12" text-anchor="middle" fill="#262626">5</text>
<text x="720.7" y="753.7" font-size="12" text-anchor="middle" fill="#262626">10</text>
<text x="307.8" y="674.7" font-size="12" text-anchor="end" fill="#262626">-10</text>
<text x="307.8" y="586.7" font-size="12" text-anchor="end" fill="#262626">-5</text>
<text x="307.8" y="498.7" font-size="12" text-anchor="end" fill="#262626">0</text>
<text x="307.8" y="409.7" font-size="12" text-anchor="end" fill="#262626">5</text>
<text x="307.8" y="321.7" font-size="12" text-anchor="end" fill="#262626">10</text>
<text x="307.8" y="233.7" font-size="12" text-anchor="end" fill="#262626">15</text>
<text x="544" y="769.7" font-size="13.2" text-anchor="middle" fill="#262626">X (mm)</text>
<text transform="translate(285.3,472.2) rotate(-90)" font-size="13.2" text-anchor="middle" fill="#262626">Y (mm)</text>
<text x="544.2" y="199.9" font-size="13.2" font-weight="bold" text-anchor="middle" fill="#111" textLength="127" lengthAdjust="spacingAndGlyphs">HNotchLayer - Metal</text>
<rect x="520" y="414.2" width="109.2" height="90.4" fill="#fafafa" stroke="#e4e0d4" stroke-width="0.8"/>
<text x="527.3" y="431.5" font-size="13.3" fill="#2a2a2a">Name: HPatch</text>
<text x="527.3" y="447.5" font-size="13.3" fill="#2a2a2a">Length: 20</text>
<text x="527.3" y="463.5" font-size="13.3" fill="#2a2a2a">Width: 20</text>
<text x="527.3" y="479.5" font-size="13.3" fill="#2a2a2a">Center: [0 0]</text>
<text x="527.3" y="495.5" font-size="13.3" fill="#2a2a2a">Angle: 0</text>
<g fill="none" stroke="#707070" stroke-width="1.2" stroke-linejoin="round" stroke-linecap="round">
<path d="M677.8 201.8V198.4H681.2M685.8 198.4H689.6V202.2H677.8"/><path d="M680.6 199.8C680.6 194.6 683.6 191.8 687.4 191.8V189.4L691.4 193L687.4 196.6V194.2C685 194.2 683.2 195.8 683 199.8Z"/><path d="M690.2 203.4L693 200.6V203.4Z" fill="#707070" stroke-width="0.6"/>
<path d="M702.4 203.6C701.8 201 700.2 199.2 697.6 195.4C696.8 194 698.4 192.8 699.6 194L702 196.8V191C702 189.4 704.2 189.4 704.2 191V189.6C704.2 188 706.6 188 706.6 189.6V190.2C706.6 188.8 709 188.8 709 190.4V191.6C709 190.2 711.2 190.2 711.2 191.8V197.4C711.2 200.2 710 201.6 709.4 203.6ZM704.2 191V195.4M706.6 190.2V195.4M709 191.6V195.4"/>
<circle cx="723.2" cy="194.7" r="5.8"/><path d="M727.4 198.9L732.6 203.4M720 194.7H726.4M723.2 191.5V197.9"/>
<circle cx="743.5" cy="194.7" r="5.8"/><path d="M747.7 198.9L752.6 203.4M740.3 194.7H746.7"/>
<path d="M757.6 196.4L765 188.6L772.6 196.4M759.6 195V203.2H763.4V198.2H766.8V203.2H770.6V195M768.4 189.6H770.4V191.4"/>
</g>
</svg>
<div class="abs" style="left:790px;top:152px;width:1px;height:640px;background:#f7f7f7"></div>
<div class="abs" style="left:791px;top:152px;width:1px;height:640px;background:#a3a3a3"></div>
<div class="abs" style="left:792px;top:152px;width:334px;height:22px;background:#fafafa"></div>
<div class="abs" style="left:792px;top:174px;width:334px;height:1px;background:#bebebe"></div>
<div class="abs" style="left:792px;top:152px;width:9px;height:23px;background:#fafafa;border-right:1px solid #c4c4c4;border-bottom:1px solid #c4c4c4"></div>
<svg class="ico" style="left:794px;top:157px" width="5" height="10"><path d="M0 0.5H4M0 2.5H4M0 4.5H4M0 6.5H4M0 8.5H4" stroke="#b9b9b9" stroke-width="1"/></svg>
<div class="abs" style="left:801px;top:152px;width:72px;height:24px;background:#fff;border-top:3px solid #a0a0a0"></div>
<div class="abs" style="left:873px;top:153px;width:1px;height:22px;background:#c4c4c4"></div>
<span class="tx" style="left:809.00px;top:156.54px;font-size:12px;line-height:16px;color:#222;">3D-View</span>
<div class="circ" style="left:1100px;top:158px"></div>
<div class="abs" style="left:792px;top:176px;width:334px;height:616px;background:#f0f0f0"></div>
<svg class="ico" style="left:792px;top:176px;overflow:hidden;will-change:transform" width="334" height="616" viewBox="792 176 334 616">
<path d="M807.4 592.2L807.4 337.4L1063.4 329.4L1063.4 584.2ZM1063.4 584.2L1063.4 329.4L1108.0 374.4L1108.0 629.2ZM807.4 592.2L1063.4 584.2L1108.0 629.2L852.0 637.2Z" fill="#fff"/>
<path d="M833.4 591.4L833.4 336.6M833.4 591.4L878.0 636.4M884.5 589.8L884.5 335.0M884.5 589.8L929.2 634.8M935.7 588.2L935.7 333.4M935.7 588.2L980.3 633.2M986.8 586.6L986.8 331.8M986.8 586.6L1031.5 631.6M1038.0 585.0L1038.0 330.2M1038.0 585.0L1082.6 630.0M1103.2 624.4L1103.2 369.6M847.2 632.4L1103.2 624.4M1085.7 606.7L1085.7 351.9M829.7 614.7L1085.7 606.7M1068.2 589.1L1068.2 334.3M812.2 597.1L1068.2 589.1M807.4 570.2L1063.4 562.2M1063.4 562.2L1108.0 607.2M807.4 519.2L1063.4 511.2M1063.4 511.2L1108.0 556.2M807.4 468.2L1063.4 460.2M1063.4 460.2L1108.0 505.2M807.4 417.2L1063.4 409.2M1063.4 409.2L1108.0 454.2M807.4 366.2L1063.4 358.2M1063.4 358.2L1108.0 403.2" stroke="#d8d8d8" stroke-width="1" fill="none"/>
<path d="M1063.4 329.4L1063.4 584.2M807.4 592.2L807.4 337.4M807.4 337.4L1063.4 329.4M1063.4 329.4L1108.0 374.4M807.4 592.2L852.0 637.2M852.0 637.2L1108.0 629.2M807.4 592.2L1063.4 584.2M1063.4 584.2L1108.0 629.2" stroke="#262626" stroke-width="1.1" fill="none"/>
<path d="M878.0 636.4l4.1 4M929.2 634.8l4.1 4M980.3 633.2l4.1 4M1031.5 631.6l4.1 4M1082.6 630.0l4.1 4M847.2 632.4l-6.6 0.2M829.7 614.7l-6.6 0.2M812.2 597.1l-6.6 0.2M807.4 570.2l-4.3 -3.7M807.4 519.2l-4.3 -3.7M807.4 468.2l-4.3 -3.7M807.4 417.2l-4.3 -3.7M807.4 366.2l-4.3 -3.7" stroke="#262626" stroke-width="1" fill="none"/>
<path d="M807.4 462.8L1063.4 454.8L1108.0 499.8L1108.0 505.2L852.0 513.2L807.4 468.2Z" fill="#eba68a"/>
<path d="M852.0 507.8L1108.0 499.8L1108.0 505.2L852.0 513.2Z" fill="#eca88c"/>
<path d="M807.4 462.8L852.0 507.8L852.0 513.2L807.4 468.2Z" fill="#eeb198"/>
<path d="M807.4 468.2L1063.4 460.2M1063.4 460.2L1108.0 505.2" stroke="#6f7f96" stroke-width="1.2" fill="none"/>
<path d="M1063.4 454.8V505.2" stroke="#7a3a28" stroke-width="1.1" opacity="0.75"/>
<path d="M838.2 466.8L1042.8 460.4L1077.8 495.7L873.2 502.1Z" fill="#ecb43b" stroke="#1890f0" stroke-width="1.3" stroke-linejoin="round"/>
<clipPath id="slabclip"><path d="M807.4 462.8L1063.4 454.8L1108.0 499.8L1108.0 505.2L852.0 513.2L807.4 468.2Z"/></clipPath>
<path d="M833.4 591.4L833.4 336.6M833.4 591.4L878.0 636.4M884.5 589.8L884.5 335.0M884.5 589.8L929.2 634.8M935.7 588.2L935.7 333.4M935.7 588.2L980.3 633.2M986.8 586.6L986.8 331.8M986.8 586.6L1031.5 631.6M1038.0 585.0L1038.0 330.2M1038.0 585.0L1082.6 630.0M1103.2 624.4L1103.2 369.6M847.2 632.4L1103.2 624.4M1085.7 606.7L1085.7 351.9M829.7 614.7L1085.7 606.7M1068.2 589.1L1068.2 334.3M812.2 597.1L1068.2 589.1M807.4 570.2L1063.4 562.2M1063.4 562.2L1108.0 607.2M807.4 519.2L1063.4 511.2M1063.4 511.2L1108.0 556.2M807.4 468.2L1063.4 460.2M1063.4 460.2L1108.0 505.2M807.4 417.2L1063.4 409.2M1063.4 409.2L1108.0 454.2M807.4 366.2L1063.4 358.2M1063.4 358.2L1108.0 403.2" stroke="#5a3a20" stroke-opacity="0.16" stroke-width="1" fill="none" clip-path="url(#slabclip)"/>
<path d="M807.4 462.8L1063.4 454.8L1108.0 499.8L852.0 507.8ZM852.0 513.2L1108.0 505.2M807.4 468.2L852.0 513.2M852.0 507.8L852.0 513.2M1108.0 499.8L1108.0 505.2M807.4 462.8L807.4 468.2" stroke="#1890f0" stroke-width="1.6" fill="none" stroke-linejoin="round"/>
<path d="M1108.0 374.4L1108.0 629.2" stroke="#262626" stroke-width="1.1" fill="none"/>
<text x="885.3" y="655.7" text-anchor="middle" fill="#333" font-size="12">-10</text>
<text x="937" y="653.2" text-anchor="middle" fill="#333" font-size="12">-5</text>
<text x="988" y="651.6" text-anchor="middle" fill="#333" font-size="12">0</text>
<text x="1039" y="650" text-anchor="middle" fill="#333" font-size="12">5</text>
<text x="1090.8" y="648.5" text-anchor="middle" fill="#333" font-size="12">10</text>
<text x="801.6" y="609.2" text-anchor="end" fill="#333" font-size="12">10</text>
<text x="819.7" y="626.3" text-anchor="end" fill="#333" font-size="12">0</text>
<text x="837.8" y="644" text-anchor="end" fill="#333" font-size="12">-10</text>
<text x="800.3" y="363.7" text-anchor="end" fill="#333" font-size="12">10</text>
<text x="800.3" y="414.7" text-anchor="end" fill="#333" font-size="12">5</text>
<text x="800.3" y="465.7" text-anchor="end" fill="#333" font-size="12">0</text>
<text x="800.3" y="516.7" text-anchor="end" fill="#333" font-size="12">-5</text>
<text x="800.3" y="567.7" text-anchor="end" fill="#333" font-size="12">-10</text>
<rect x="792" y="354.2" width="2" height="13" fill="#f0f0f0"/>
<rect x="792" y="558.2" width="2" height="13" fill="#f0f0f0"/>
<text x="976.8" y="669.2" text-anchor="middle" fill="#262626" font-size="13.2">X (mm)</text>
<text x="802.2" y="660.7" text-anchor="end" fill="#262626" font-size="13.2">Y (mm)</text>
<circle cx="792.6" cy="472.6" r="0.9" fill="#262626"/>
<rect x="1124.6" y="406.6" width="1.4" height="1.2" fill="#1a2a5a"/><rect x="1124.6" y="414.8" width="1.4" height="1.2" fill="#1a2a5a"/>
</svg>
<div class="abs" style="left:800px;top:765px;width:13px;height:13px;background:#fff;border:1px solid #4a4a4a"></div>
<span class="tx" style="left:817.80px;top:763.84px;font-size:12px;line-height:16px;color:#111;">Hide Dielectric</span>
<div class="abs" style="left:0;top:0;width:1127px;height:1px;background:#8c8c8c"></div>
<div class="abs" style="left:75px;top:0;width:335px;height:1px;background:#4a4a4a"></div>
<div class="abs" style="left:0;top:0;width:1px;height:793px;background:#3a3a3a"></div>
<div class="abs" style="left:1126px;top:0;width:1px;height:793px;background:#a0a0a0"></div>
<div class="abs" style="left:0;top:792px;width:541px;height:1px;background:#333"></div>
<div class="abs" style="left:541px;top:792px;width:586px;height:1px;background:#a0a0a0"></div>
</div>
</body>
</html>
